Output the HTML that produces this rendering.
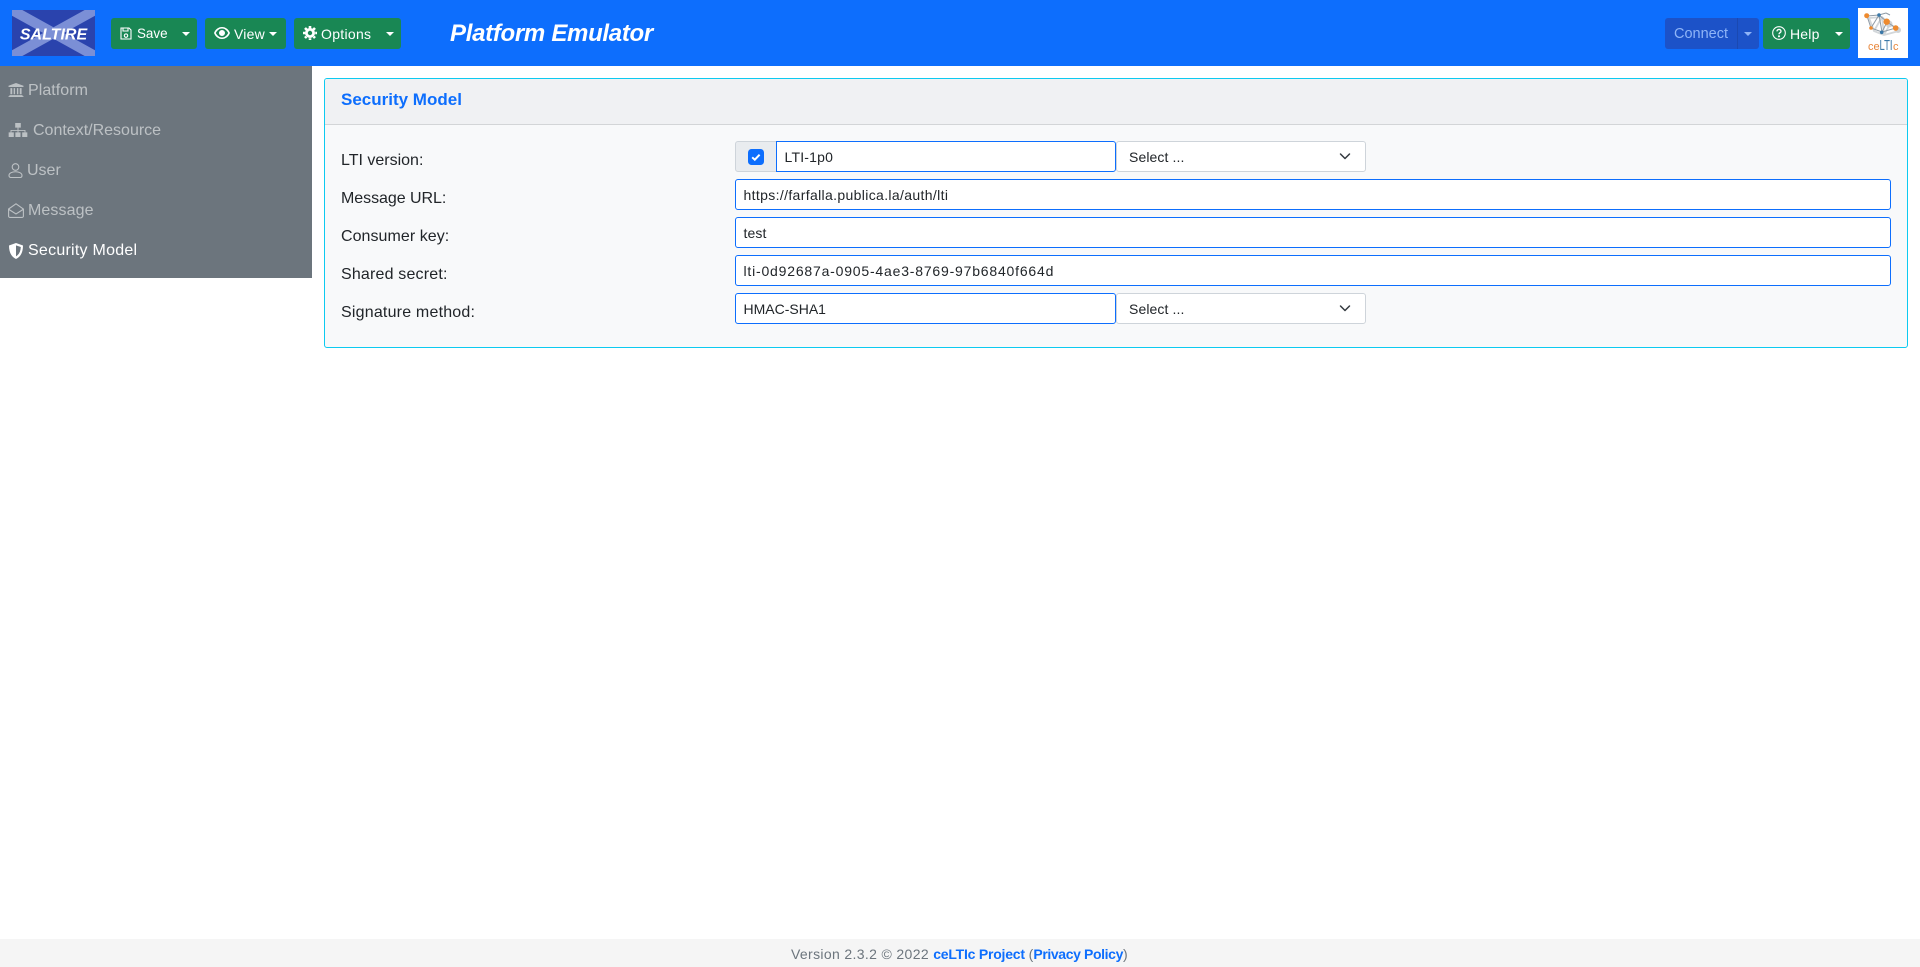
<!DOCTYPE html>
<html lang="en"><head><meta charset="utf-8"><title>Platform Emulator</title>
<style>
*{box-sizing:border-box}
html,body{margin:0;padding:0;width:1920px;height:967px;overflow:hidden;background:#fff;font-family:"Liberation Sans",sans-serif;color:#212529}
.a{position:absolute}
.t{position:absolute;white-space:nowrap}
.btn{position:absolute;top:18px;height:31px;background:#198754;border-radius:3px;color:#fff;font-size:14px}
.btn .t{top:8px;line-height:16px}
.car{position:absolute;width:0;height:0;border-left:4px solid transparent;border-right:4px solid transparent;border-top:4px solid currentColor;top:14px}
.side{position:absolute;left:0;top:66px;width:312px;height:212px;background:#6c757d}
.nav{position:absolute;font-size:16px;line-height:20px;color:rgba(255,255,255,.55);white-space:nowrap}
.nav svg{position:absolute;top:2px;left:0}
.inp{position:absolute;z-index:2;height:31px;background:#fff;border:1px solid #0d6efd;border-radius:3px;font-size:14px;line-height:30px;padding-left:7.500px;white-space:nowrap;color:#212529}
.sel{position:absolute;height:31px;width:250px;background:#fff;border:1px solid #ced4da;border-radius:3px;font-size:14px;line-height:30px;padding-left:12px;color:#212529;letter-spacing:.1px}
.sel svg{position:absolute;right:12px;top:9px}
.lab{position:absolute;left:341px;font-size:16px;line-height:20px;white-space:nowrap;color:#212529}
</style></head><body>
<div class="a" style="left:0;top:0;width:1920px;height:66px;background:#0d6efd"></div>

<svg class="a" style="left:12px;top:10px" width="83" height="46" viewBox="0 0 83 46"><rect width="83" height="46" fill="#2a43ad"/><path d="M0 0L83 46M83 0L0 46" stroke="#7b8fd6" stroke-width="10"/><text x="41.5" y="29.500" text-anchor="middle" font-family="Liberation Sans" font-size="16" font-style="italic" font-weight="700" fill="#fff">SALTIRE</text></svg>

<div class="btn" style="left:111px;width:86px">
<svg class="a" style="left:9px;top:9px" width="12" height="13" viewBox="0 0 12 13" fill="none" stroke="#fff" stroke-width="1.1"><path d="M1 1h8l2 2v9H1z"/><path d="M3 1v3h5V1"/><circle cx="6" cy="8.6" r="1.7"/></svg>
<span class="t" style="left:26px;font-size:13.400px">Save</span><i class="car" style="left:71px"></i></div>

<div class="btn" style="left:205px;width:81px">
<svg class="a" style="left:9px;top:9px" width="16" height="12" viewBox="0 0 16 12"><path fill="#fff" fill-rule="evenodd" d="M8 0c3.600 0 6.600 2.400 8 6-1.400 3.600-4.400 6-8 6S1.400 9.600 0 6c1.400-3.600 4.400-6 8-6zm0 1.500C5.500 1.500 3.200 3.200 1.800 6 3.200 8.800 5.500 10.500 8 10.500S12.800 8.800 14.200 6C12.800 3.200 10.500 1.500 8 1.500zM8 3a3 3 0 1 1 0 6 3 3 0 0 1 0-6z"/></svg>
<span class="t" style="left:29px;letter-spacing:.2px">View</span><i class="car" style="left:64px"></i></div>

<div class="btn" style="left:294px;width:107px">
<svg class="a" style="left:9px;top:8px" width="14" height="14" viewBox="0 0 14 14"><circle cx="7" cy="7" r="3.600" fill="none" stroke="#fff" stroke-width="2.800"/><path stroke="#fff" stroke-width="2.600" d="M7 0v14M0 7h14M2 2l10 10M12 2L2 12" stroke-dasharray="2.400 9.800 2.400"/></svg>
<span class="t" style="left:27px;letter-spacing:.3px">Options</span><i class="car" style="left:92px"></i></div>

<div class="t" style="left:450px;top:19px;font-size:24px;line-height:30px;font-style:italic;font-weight:700;color:#fff;letter-spacing:-.3px">Platform Emulator</div>

<div class="btn" style="left:1665px;width:94px;background:#1c52c8;color:#8fb4f7">
<span class="t" style="left:9px;font-size:14.500px">Connect</span>
<div class="a" style="left:72px;top:0;width:1px;height:31px;background:#1a49b2"></div><i class="car" style="left:79px"></i></div>

<div class="btn" style="left:1763px;width:87px">
<svg class="a" style="left:9px;top:8px" width="14" height="14" viewBox="0 0 14 14" fill="none" stroke="#fff" stroke-width="1.100"><circle cx="7" cy="7" r="6.300"/><path stroke-width="1.300" d="M5 5.400C5 2.800 9 2.800 9 5.200c0 1.500-2 1.500-2 3"/><circle cx="7" cy="10.300" r=".5" fill="#fff"/></svg>
<span class="t" style="left:27px;letter-spacing:.2px">Help</span><i class="car" style="left:72px"></i></div>

<svg class="a" style="left:1858px;top:8px" width="50" height="50" viewBox="0 0 50 50"><rect width="50" height="50" fill="#fff"/><path d="M11 10L24 9L32 16L41 23L26 27L16 23ZM24 9L16 23M24 9L26 27M32 16L26 27" fill="none" stroke="#d3d7da" stroke-width="1.800"/><circle cx="31" cy="16" r="3.500" fill="#cfd3d6"/><circle cx="40" cy="22" r="3" fill="#cfd3d6"/><path d="M9 8L21 7L29 14L38 20L24 24L13 20ZM21 7L13 20M21 7L24 24M29 14L24 24M28 5L21 7M28 5L32 7" fill="none" stroke="#8f9ba6" stroke-width="1"/><circle cx="8.700" cy="7.700" r="2.500" fill="#ee8a2e"/><circle cx="28.700" cy="13.700" r="3.200" fill="#ee8a2e"/><circle cx="37.700" cy="20" r="2.800" fill="#ee8a2e"/><circle cx="21" cy="7" r="1.800" fill="#3a78a8"/><circle cx="23.700" cy="24.300" r="1.800" fill="#3a78a8"/><circle cx="13" cy="20" r="1.800" fill="#ee8a2e"/><text x="10" y="42" font-family="Liberation Sans" font-size="11" fill="#e8863a">ce</text><text x="21.500" y="42" font-family="Liberation Sans" font-size="15" fill="#3a78a8" textLength="13" lengthAdjust="spacingAndGlyphs">LTI</text><text x="35" y="42" font-family="Liberation Sans" font-size="11" fill="#e8863a">c</text></svg>

<div class="side"></div>
<div class="nav" style="left:8px;top:81px;width:200px"><svg width="16" height="14" viewBox="0 0 16 15" fill="rgba(255,255,255,.55)"><path d="M8 0l8 3v1.300H0V3zM1 13h14v1H1zM0 14h16v1H0zM2 5.500h2V12H2zM5.500 5.500h1.500V12H5.500zM9 5.500h1.500V12H9zM12 5.500h2V12h-2z"/></svg><span style="margin-left:20px;letter-spacing:.05px">Platform</span></div>
<div class="nav" style="left:8px;top:121px;width:240px"><svg width="20" height="14" viewBox="0 0 20 15" fill="rgba(255,255,255,.55)"><path d="M7 0h6v5H7zM0 10h5.500v5H0zM7.200 10h5.500v5H7.200zM14.500 10H20v5h-5.500z"/><path d="M9.500 5h1v2.500H18V10h-1V8.500h-6.500V10h-1V8.500H3V10H2V7.500h7.500z"/></svg><span style="margin-left:25px">Context/Resource</span></div>
<div class="nav" style="left:8px;top:161px;width:200px"><svg width="15" height="15" viewBox="0 0 15 15" fill="none" stroke="rgba(255,255,255,.55)" stroke-width="1.100"><circle cx="7.500" cy="4" r="3.300"/><path d="M1 12.500c0-5 13-5 13 0 0 1-.6 2-2 2H3c-1.400 0-2-1-2-2z"/></svg><span style="margin-left:19px">User</span></div>
<div class="nav" style="left:8px;top:201px;width:200px"><svg width="16" height="15" viewBox="0 0 16 15" fill="none" stroke="rgba(255,255,255,.55)" stroke-width="1.100"><path d="M.6 6L8 .8 15.400 6v7.200a1.200 1.200 0 0 1-1.200 1.200H1.800A1.200 1.200 0 0 1 .6 13.200z"/><path d="M1 6.500l7 4.500 7-4.500"/></svg><span style="margin-left:20px;letter-spacing:.1px">Message</span></div>
<div class="nav" style="left:8px;top:241px;width:200px;color:#fff"><svg width="16" height="16" viewBox="0 0 16 16"><path fill="#fff" fill-rule="evenodd" d="M8 0l7 2.500C15 9 13 13.500 8 16 3 13.500 1 9 1 2.500zm0 2.400v11C11 11.500 12.600 8.500 12.800 4z"/></svg><span style="margin-left:20px;letter-spacing:.25px">Security Model</span></div>

<div class="a" style="left:324px;top:78px;width:1584px;height:270px;background:#f8f9fa;border:1px solid #0dcaf0;border-radius:3px"></div>
<div class="a" style="left:325px;top:79px;width:1582px;height:46px;background:#f0f1f3;border-bottom:1px solid #d3d5d7;border-radius:2px 2px 0 0"></div>
<div class="t" style="left:341px;top:89px;font-size:17px;line-height:21px;font-weight:700;color:#0d6efd">Security Model</div>

<div class="lab" style="top:151px">LTI version:</div>
<div class="lab" style="top:189px;letter-spacing:-.05px">Message URL:</div>
<div class="lab" style="top:227px;letter-spacing:.05px">Consumer key:</div>
<div class="lab" style="top:265px;letter-spacing:.18px">Shared secret:</div>
<div class="lab" style="top:303px;letter-spacing:.2px">Signature method:</div>

<div class="a" style="left:735px;top:141px;width:42px;height:31px;background:#e9ecef;border:1px solid #ced4da;border-radius:3px 0 0 3px"></div>
<svg class="a" style="left:748px;top:149px" width="16" height="16" viewBox="0 0 16 16"><rect width="16" height="16" rx="3.500" fill="#0d6efd"/><path d="M4.200 8.300l2.600 2.400 4.800-5" fill="none" stroke="#fff" stroke-width="2"/></svg>
<div class="inp" style="left:776px;top:141px;width:340px;border-radius:0 3px 3px 0;letter-spacing:.2px">LTI-1p0</div>
<div class="sel" style="left:1116px;top:141px">Select ...<svg width="16" height="12" viewBox="0 0 16 12" fill="none" stroke="#343a40" stroke-width="1.500" stroke-linecap="round" stroke-linejoin="round"><path d="M3.500 3l4.500 4.500L12.500 3"/></svg></div>
<div class="inp" style="left:735px;top:179px;width:1156px;letter-spacing:.35px">https://farfalla.publica.la/auth/lti</div>
<div class="inp" style="left:735px;top:217px;width:1156px;letter-spacing:.1px">test</div>
<div class="inp" style="left:735px;top:255px;width:1156px;letter-spacing:.8px">lti-0d92687a-0905-4ae3-8769-97b6840f664d</div>
<div class="inp" style="left:735px;top:293px;width:381px">HMAC-SHA1</div>
<div class="sel" style="left:1116px;top:293px">Select ...<svg width="16" height="12" viewBox="0 0 16 12" fill="none" stroke="#343a40" stroke-width="1.500" stroke-linecap="round" stroke-linejoin="round"><path d="M3.500 3l4.500 4.500L12.500 3"/></svg></div>

<div class="a" style="left:0;top:939px;width:1920px;height:28px;background:#f5f5f5"></div>
<div class="t" style="left:791px;top:946px;font-size:14px;line-height:17px;color:#6c757d"><span style="letter-spacing:.35px">Version 2.3.2 © 2022 </span><span style="color:#0d6efd;font-weight:700;letter-spacing:-.22px">ceLTIc Project</span> (<span style="color:#0d6efd;font-weight:700;letter-spacing:-.38px">Privacy Policy</span>)</div>
</body></html>
